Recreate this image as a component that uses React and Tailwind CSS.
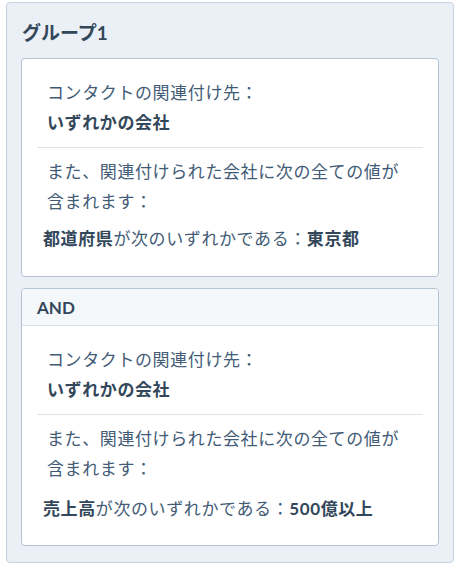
import React from "react";

const FONT = { fontFamily: '"Lato", "Noto Sans CJK JP", sans-serif' };

function Condition({ field, value, lastGap }) {
  return (
    <>
      <div className="pl-[10px] text-[#425b76]">コンタクトの関連付け先：</div>
      <div className="pl-[10px] font-bold text-[#33475b]">いずれかの会社</div>
      <div className="my-[9px] border-t border-[#dfe3eb]" />
      <div className="pl-[10px] pr-[20px] text-[#425b76]">
        また、関連付けられた会社に次の全ての値が含まれます：
      </div>
      <div className={`${lastGap} pl-[6px] text-[#425b76]`}>
        <span className="font-bold text-[#33475b]">{field}</span>
        が次のいずれかである：
        <span className="font-bold text-[#33475b]">{value}</span>
      </div>
    </>
  );
}

export default function App() {
  return (
    <div className="min-h-screen bg-white pl-[6px] pt-[2px]" style={FONT}>
      <div className="w-[448px] rounded-[4px] border border-[#c7d3e0] bg-[#eaf0f6] px-[14px] pb-[16px]">
        <div className="pt-[18px] pb-[13px] pl-[1px] text-[19px] leading-[24px] font-bold text-[#33475b]">
          グループ1
        </div>

        <div className="rounded-[4px] border border-[#b4c3d4] bg-white px-[15px] pt-[19px] pb-[22px] text-[17px] leading-[30px] tracking-[0.6px]">
          <Condition field="都道府県" value="東京都" lastGap="mt-[7px]" />
        </div>

        <div className="mt-[11px] overflow-hidden rounded-[4px] border border-[#b4c3d4] bg-white">
          <div className="h-[37px] border-b border-[#dbe3ec] bg-[#f5f8fa] px-[15px] text-[17px] leading-[37px] font-bold text-[#33475b]">
            AND
          </div>
          <div className="px-[15px] pt-[19px] pb-[21px] text-[17px] leading-[30px] tracking-[0.6px]">
            <Condition field="売上高" value="500億以上" lastGap="mt-[10px]" />
          </div>
        </div>
      </div>
    </div>
  );
}
